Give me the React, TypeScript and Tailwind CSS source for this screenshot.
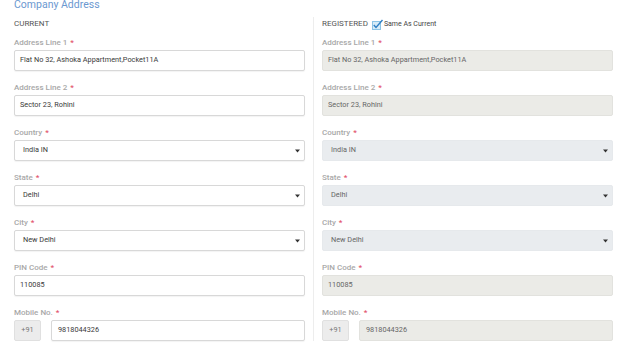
import React from "react";

type Field = {
  label: string;
  value: string;
  kind: "text" | "select" | "phone";
};

const FIELDS: Field[] = [
  { label: "Address Line 1", value: "Flat No 32, Ashoka Appartment,Pocket11A", kind: "text" },
  { label: "Address Line 2", value: "Sector 23, Rohini", kind: "text" },
  { label: "Country", value: "India IN", kind: "select" },
  { label: "State", value: "Delhi", kind: "select" },
  { label: "City", value: "New Delhi", kind: "select" },
  { label: "PIN Code", value: "110085", kind: "text" },
  { label: "Mobile No.", value: "9818044326", kind: "phone" },
];

export default function App() {
  return (
    <div
      className="w-[623px] h-[345px] overflow-hidden bg-white text-[#333]"
      style={{ fontFamily: "Roboto, 'Liberation Sans', sans-serif" }}
    >
      {/* Section title — clipped at the top edge */}
      <div className="h-[14px] flex items-start pl-[14px]">
        <h2 className="-mt-[2px] text-[10.5px] leading-[14px] text-[#6b98d0]">Company Address</h2>
      </div>

      <div className="flex pl-[14px] pt-[3px]">
        <AddressColumn title="CURRENT" disabled={false} />
        <div className="w-[17px] flex justify-center shrink-0">
          <div className="w-px h-full bg-[#ededed]" />
        </div>
        <AddressColumn title="REGISTERED" disabled />
      </div>
    </div>
  );
}

function AddressColumn({ title, disabled }: { title: string; disabled: boolean }) {
  return (
    <div className="w-[291px] shrink-0">
      <div className="h-[14px] flex items-center gap-[4px] text-[8px] text-[#555] mb-[4px]">
        <span>{title}</span>
        {disabled && (
          <span className="flex items-center text-[7px] text-[#444]">
            <SameCheck />
            Same As Current
          </span>
        )}
      </div>
      <div className="flex flex-col gap-[9px]">
        {FIELDS.map((f) => (
          <FormField key={f.label} field={f} disabled={disabled} />
        ))}
      </div>
    </div>
  );
}

function FormField({ field, disabled }: { field: Field; disabled: boolean }) {
  const textBox = disabled
    ? "bg-[#ebebe7] border-[#e2e2de] text-[#666]"
    : "bg-white border-[#d8d8d8] text-[#3a3a3a] shadow-[0_1px_1px_rgba(0,0,0,0.05)]";
  const selectBox = disabled
    ? "bg-[#e9ecef] border-[#e6e9ec] text-[#666]"
    : "bg-white border-[#d8d8d8] text-[#3a3a3a] shadow-[0_1px_1px_rgba(0,0,0,0.05)]";

  return (
    <div>
      <div className="h-[15px] flex items-center text-[8px] font-medium text-[#a8a8a8]">
        {field.label}
        <span className="ml-[3px] text-[#e2506a]">*</span>
      </div>
      {field.kind === "text" && (
        <div className={`h-[21px] flex items-center px-[5px] border rounded-[2px] text-[7.3px] ${textBox}`}>
          {field.value}
        </div>
      )}
      {field.kind === "select" && (
        <div className={`h-[21px] flex items-center justify-between pl-[8px] pr-[4px] border rounded-[2px] text-[7.3px] ${selectBox}`}>
          <span>{field.value}</span>
          <svg width="5" height="4" viewBox="0 0 5 4" className="text-[#333]">
            <path d="M0 0.5 L5 0.5 L2.5 3.5 Z" fill="currentColor" />
          </svg>
        </div>
      )}
      {field.kind === "phone" && (
        <div className="flex gap-[10px]">
          <div className="w-[27px] h-[21px] flex items-center justify-center bg-[#ececec] border border-[#e0e0e0] rounded-[2px] text-[7.3px] text-[#777]">
            +91
          </div>
          <div className={`flex-1 h-[21px] flex items-center px-[6px] border rounded-[2px] text-[7.3px] ${textBox}`}>
            {field.value}
          </div>
        </div>
      )}
    </div>
  );
}

function SameCheck() {
  return (
    <svg width="12" height="11" viewBox="0 0 12 11">
      <rect x="0.5" y="2.5" width="8" height="8" fill="#d6ebf7" stroke="#8cc4e6" />
      <path d="M1.8 6 L4 8.4 L10.5 1" fill="none" stroke="#2f7fc4" strokeWidth="1.4" />
    </svg>
  );
}
